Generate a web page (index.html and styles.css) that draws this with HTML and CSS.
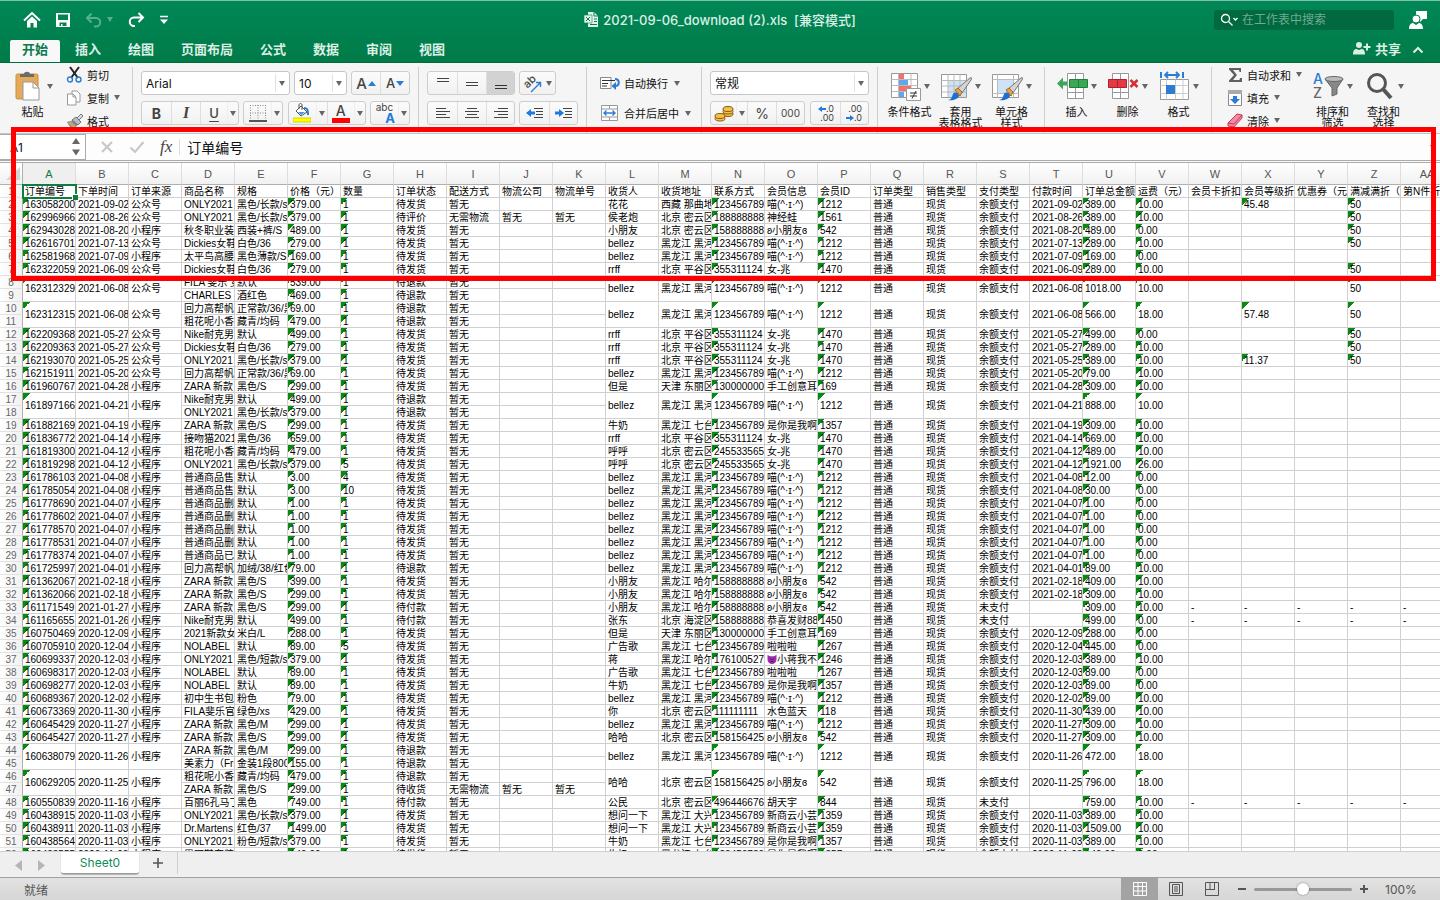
FILE: index.html
```
<!DOCTYPE html>
<html lang="zh-CN">
<head>
    <meta charset="UTF-8">
    <meta name="viewport" content="width=device-width, initial-scale=1.0">
    <title>2021-09-06_download (2).xls</title>
    <link rel="stylesheet" href="styles.css">
</head>
<body>

    <!-- Title bar and ribbon tabs -->
    <header class="top">
        <div class="titlebar">
            <div class="quick">
                <button class="plain" aria-label="主页"><svg width="18" height="18" viewBox="0 0 18 18"><path d="M1 9.500L9 2l8 7.500" fill="none" stroke="#fff" stroke-width="2"/><path d="M4 10l5-4.500L14 10v6.500h-3.500V12h-3v4.500H4z" fill="#fff"/></svg></button>
                <button class="plain save" aria-label="保存"><svg width="16" height="16" viewBox="0 0 16 16"><path d="M1 1h14v14H1z" fill="#fff"/><path d="M3 2.500h10V8H3zM4.500 10.500h7V14h-4v-2H6v2H4.500z" fill="#008252"/></svg></button>
                <button class="plain dim" aria-label="撤销"><svg width="18" height="16" viewBox="0 0 18 16"><path d="M6.500 1.500L2 6l4.500 4.500M2.500 6H11a4 4 0 0 1 0 8.500H9" fill="none" stroke="#fff" stroke-width="2"/></svg><i class="arrow light"></i></button>
                <button class="plain" aria-label="重做"><svg width="18" height="16" viewBox="0 0 18 16"><path d="M11.500 1L16 5.500 11.500 10M15.500 5.500H7a4 4 0 0 0 0 8.500h1" fill="none" stroke="#fff" stroke-width="2"/></svg></button>
                <button class="plain more" aria-label="自定义"><svg width="10" height="10" viewBox="0 0 10 10"><path d="M1 1.500h8" stroke="#fff" stroke-width="1.500"/><path d="M1 4.500h8L5 9z" fill="#fff"/></svg></button>
            </div>
            <h1 class="doc-title">
                <svg width="14" height="15" viewBox="0 0 14 15"><path d="M4 0h6l4 4v11H4z" fill="#e5f2ec"/><path d="M10 0v4h4" fill="none" stroke="#008252"/><path d="M0 3h8v8H0z" fill="#e5f2ec" stroke="#008252" stroke-width=".6"/><path d="M2 5l4 4M6 5L2 9M10 7h3M10 9.500h3M6 12.500h7" stroke="#008252"/></svg>
                2021-09-06_download (2).xls&nbsp; [兼容模式]
            </h1>
            <div class="title-right">
                <label class="search">
                    <svg width="18" height="14" viewBox="0 0 18 14"><circle cx="5.500" cy="5.500" r="4" fill="none" stroke="#fff" stroke-width="1.300"/><path d="M8.500 8.500l4 4M13.500 5l2 2 2-2" fill="none" stroke="#fff" stroke-width="1.300"/></svg>
                    <input type="text" placeholder="在工作表中搜索" aria-label="在工作表中搜索">
                </label>
                <button class="plain" aria-label="反馈"><svg width="20" height="20" viewBox="0 0 20 20"><path d="M8 1h11v8h-4l-3 3V9H8z" fill="#fff"/><circle cx="8" cy="9" r="4" fill="#fff" stroke="#008252"/><path d="M1 19c0-4 2-6 4-6l3 2 3-2c2 0 4 2 4 6z" fill="#fff"/></svg></button>
            </div>
        </div>
        <nav class="tabs">
            <a href="#" class="tab active">开始</a>
            <a href="#" class="tab">插入</a>
            <a href="#" class="tab">绘图</a>
            <a href="#" class="tab">页面布局</a>
            <a href="#" class="tab">公式</a>
            <a href="#" class="tab">数据</a>
            <a href="#" class="tab">审阅</a>
            <a href="#" class="tab">视图</a>
            <button class="plain share"><svg width="18" height="14" viewBox="0 0 18 14"><circle cx="6" cy="4" r="3" fill="#dcefe6"/><path d="M0 13.500c0-4 1.500-5.500 3.500-5.500L6 9l2.500-1c2 0 3.500 1.500 3.500 5.500z" fill="#dcefe6"/><path d="M10.500 6h7M14 2.500v7" stroke="#dcefe6" stroke-width="2"/></svg>共享</button>
            <button class="plain fold" aria-label="折叠"><svg width="12" height="8" viewBox="0 0 12 8"><path d="M1.500 6.500L6 2l4.500 4.500" fill="none" stroke="#dcefe6" stroke-width="2"/></svg></button>
        </nav>
    </header>

    <!-- Ribbon -->
    <section class="ribbon">
        <div class="group clipboard">
            <button class="big">
                <span class="big-top"><svg width="31" height="30" viewBox="0 0 31 30"><rect x="3" y="3" width="22" height="25" rx="1.500" fill="#e5aa59" stroke="#c98f3e"/><path d="M7 6V3h4c0-3 6-3 6 0h4v3z" fill="#6b6b6b"/><path d="M10 11h10l6 6v12H10z" fill="#fff" stroke="#999"/><path d="M20 11v6h6" fill="none" stroke="#999"/></svg><i class="arrow"></i></span>
                <span class="big-label">粘贴</span>
            </button>
            <div class="small-list">
                <button class="small"><svg width="18" height="18" viewBox="0 0 18 18"><path d="M4 1l8 11M13 1L5 12" stroke="#222" stroke-width="2"/><circle cx="4" cy="13.500" r="2.500" fill="none" stroke="#2b7cd3" stroke-width="1.400"/><circle cx="12.500" cy="13.500" r="2.500" fill="none" stroke="#2b7cd3" stroke-width="1.400"/></svg>剪切</button>
                <button class="small"><svg width="18" height="18" viewBox="0 0 18 18"><path d="M6 2h5l3 3v8H6z" fill="#fff" stroke="#999"/><path d="M1.500 5H7l3 3v8H1.500z" fill="#fff" stroke="#999"/><path d="M7 5v3h3" fill="none" stroke="#999"/></svg>复制<i class="arrow"></i></button>
                <button class="small"><svg width="18" height="18" viewBox="0 0 18 18"><path d="M1 10l7-2 4 4-4 6c-3-2-5-4-7-8z" fill="#4a90d0"/><path d="M6 8l4-3 5 5-3 3z" fill="#bbb" stroke="#777"/><path d="M11 6l4-4 2 2-4 4z" fill="#ddd" stroke="#777"/><path d="M1 10l4-1 5 5-2 3z" fill="#c9a35c"/></svg>格式</button>
            </div>
        </div>
        <span class="divider"></span>

        <div class="group rows">
            <div class="row">
                <span class="combo font-name"><select aria-label="字体"><option>Arial</option></select></span>
                <span class="combo font-size"><select aria-label="字号"><option>10</option></select></span>
                <div class="btns">
                    <button class="w30 letter" aria-label="增大字号">A<svg width="8" height="5" viewBox="0 0 8 5"><path d="M0 5l4-5 4 5z" fill="#2b7cd3"/></svg></button>
                    <button class="w29 letter small-a" aria-label="减小字号">A<svg width="8" height="5" viewBox="0 0 8 5"><path d="M0 0l4 5 4-5z" fill="#2b7cd3"/></svg></button>
                </div>
            </div>
            <div class="row spread">
                <div class="btns">
                    <button class="w29 bold">B</button>
                    <button class="w29 italic">I</button>
                    <button class="w27 under">U</button>
                    <button class="drop" aria-label="下划线"><i class="arrow"></i></button>
                </div>
                <div class="btns">
                    <button class="w27" aria-label="边框"><svg width="18" height="18" viewBox="0 0 18 18"><path d="M1 1.500h16M1 9h16M1.500 1v15M9 1v15M16.500 1v15" stroke="#888" stroke-dasharray="1 1.500"/><path d="M0 17h18" stroke="#222" stroke-width="1.500"/></svg></button>
                    <button class="drop" aria-label="边框选项"><i class="arrow"></i></button>
                </div>
                <div class="btns">
                    <button class="w27" aria-label="填充颜色"><svg width="18" height="20" viewBox="0 0 18 20"><path d="M8 3l6 6-6 4-5-5z" fill="#fff" stroke="#555"/><path d="M6 6V2c0-2 3-2 3 0v5" fill="none" stroke="#555"/><path d="M11 5c4 0 4 3 4 7" fill="none" stroke="#2b7cd3" stroke-width="2"/><path d="M5 9h7l-4 3z" fill="#4a94dd"/><path d="M0 15h18v4H0z" fill="#ff0" stroke="#d6d600"/></svg></button>
                    <button class="drop" aria-label="填充选项"><i class="arrow"></i></button>
                    <button class="w27 font-color" aria-label="字体颜色">A</button>
                    <button class="drop" aria-label="颜色选项"><i class="arrow"></i></button>
                </div>
                <div class="btns">
                    <button class="w27 phonetic" aria-label="拼音"><span>abc</span><b>A</b></button>
                    <button class="drop" aria-label="拼音选项"><i class="arrow"></i></button>
                </div>
            </div>
        </div>
        <span class="divider"></span>

        <div class="group rows">
            <div class="row">
                <div class="btns">
                    <button class="w29" aria-label="顶端对齐"><svg width="14" height="16" viewBox="0 0 14 16"><path d="M1 3.500h12M1 6.500h12" stroke="#444"/></svg></button>
                    <button class="w29" aria-label="垂直居中"><svg width="14" height="16" viewBox="0 0 14 16"><path d="M1 7.500h12M1 10.500h12" stroke="#444"/></svg></button>
                    <button class="w30 pressed" aria-label="底端对齐"><svg width="14" height="16" viewBox="0 0 14 16"><path d="M1 10.500h12M1 13.500h12" stroke="#333"/></svg></button>
                </div>
                <div class="btns">
                    <button class="w37" aria-label="方向"><svg width="18" height="20" viewBox="0 0 18 20"><text x="0" y="13" transform="rotate(-45 5 10)" font-family="Inter" font-size="11" font-weight="500" fill="#444">ab</text><path d="M7 19l9-9M12 9.500h4.500V14" fill="none" stroke="#2b7cd3" stroke-width="1.400"/></svg><i class="arrow"></i></button>
                </div>
            </div>
            <div class="row">
                <div class="btns">
                    <button class="w29" aria-label="左对齐"><svg width="16" height="14" viewBox="0 0 16 14"><path d="M1 2.500h10M1 5.500h14M1 8.500h10M1 11.500h14" stroke="#444"/></svg></button>
                    <button class="w29" aria-label="居中"><svg width="16" height="14" viewBox="0 0 16 14"><path d="M3 2.500h10M1 5.500h14M3 8.500h10M1 11.500h14" stroke="#444"/></svg></button>
                    <button class="w30" aria-label="右对齐"><svg width="16" height="14" viewBox="0 0 16 14"><path d="M5 2.500h10M1 5.500h14M5 8.500h10M1 11.500h14" stroke="#444"/></svg></button>
                </div>
                <div class="btns">
                    <button class="w29" aria-label="减少缩进"><svg width="18" height="14" viewBox="0 0 18 14"><path d="M8 2.500h9M10 5.500h7M10 8.500h7M8 11.500h9" stroke="#444"/><path d="M0 7l5-4v2.500h4v3H5V11z" fill="#1f7bdc"/></svg></button>
                    <button class="w30" aria-label="增加缩进"><svg width="18" height="14" viewBox="0 0 18 14"><path d="M8 2.500h9M10 5.500h7M10 8.500h7M8 11.500h9" stroke="#444"/><path d="M9 7L4 3v2.500H0v3h4V11z" fill="#1f7bdc"/></svg></button>
                </div>
            </div>
        </div>
        <span class="divider"></span>

        <div class="group rows wrap-group">
            <button class="small tall"><svg width="20" height="16" viewBox="0 0 20 16"><path d="M.5 2.500H11v11H.500z" fill="#fff" stroke="#888"/><path d="M2 5.500h13M2 8.500h6M2 11h5" stroke="#333"/><path d="M15 4c5 0 5 7 0 7" fill="none" stroke="#2b7cd3" stroke-width="2"/><path d="M11.500 11l4.500-4v8z" fill="#2b7cd3"/></svg>自动换行<i class="arrow"></i></button>
            <button class="small tall"><svg width="20" height="18" viewBox="0 0 20 18"><path d="M1.500 1.500h16v15h-16zM1.500 5h16M1.500 13h16M9.500 1.500V5M9.500 13v3.500" fill="#fff" stroke="#999"/><path d="M4 9h11M6.500 6.500L4 9l2.500 2.500M12.500 6.500L15 9l-2.500 2.500" fill="none" stroke="#2b7cd3" stroke-width="1.400"/></svg>合并后居中<i class="arrow"></i></button>
        </div>
        <span class="divider"></span>

        <div class="group rows">
            <div class="row">
                <span class="combo number-format"><select aria-label="数字格式"><option>常规</option></select></span>
            </div>
            <div class="row spread">
                <div class="btns">
                    <button class="w25" aria-label="货币"><svg width="20" height="18" viewBox="0 0 20 18"><g fill="#f2c14a" stroke="#8a5a10"><ellipse cx="14" cy="10" rx="5" ry="2.500"/><ellipse cx="14" cy="7.500" rx="5" ry="2.500"/><ellipse cx="14" cy="5" rx="5" ry="2.500"/><ellipse cx="6" cy="14.500" rx="5" ry="2.500"/><ellipse cx="6" cy="12" rx="5" ry="2.500"/></g></svg></button>
                    <button class="drop" aria-label="货币选项"><i class="arrow"></i></button>
                    <button class="w29 percent">%</button>
                    <button class="w30 zeros">000</button>
                </div>
                <div class="btns">
                    <button class="w29 decimals" aria-label="增加小数"><span><svg width="8" height="6" viewBox="0 0 8 6"><path d="M0 3l4-3v2h4v2H4v2z" fill="#1f7bdc"/></svg>.0</span><span>.00</span></button>
                    <button class="w30 decimals" aria-label="减少小数"><span>.00</span><span><svg width="8" height="6" viewBox="0 0 8 6"><path d="M8 3L4 0v2H0v2h4v2z" fill="#1f7bdc"/></svg>.0</span></button>
                </div>
            </div>
        </div>
        <span class="divider"></span>

        <div class="group bigs">
            <button class="big">
                <span class="big-top"><svg width="31" height="30" viewBox="0 0 31 30"><path d="M1.500 2.500h26v24h-26z" fill="#fff" stroke="#999"/><path d="M1.500 8.500h26M1.500 14.500h26M1.500 20.500h26M8.500 2.500v24M21 2.500v24" stroke="#bbb"/><path d="M9 3h5v5H9zM9 15h12v5H9z" fill="#f4706c"/><path d="M9 9h9v5H9zM9 21h5v5H9z" fill="#5ea7ea"/><path d="M16.500 17.500h14v12h-14z" fill="#fff" stroke="#999"/><path d="M20 22h7M20 25h7M26 20l-4 7.500" stroke="#333"/></svg><i class="arrow"></i></span>
                <span class="big-label">条件格式</span>
            </button>
            <button class="big">
                <span class="big-top"><svg width="31" height="30" viewBox="0 0 31 30"><path d="M.5 3.500h25v23H.500z" fill="#fff" stroke="#999"/><path d="M7 9h18v17H7z" fill="#cfe3f6"/><path d="M.5 9.500h25M.5 15h25M.5 21h25M7 3.500v23M13 3.500v23M19 3.500v23" stroke="#bbb"/><path d="M16 18L29 7c2-1 2 0 1 2l-9 13z" fill="#d5d5d5" stroke="#777"/><path d="M14 19l3-2 4 4-2 4z" fill="#e9a243" stroke="#a56a19"/><path d="M7 29c3 0 4-3 5-6 2-3 6-1 6 2-1 3-6 5-11 4z" fill="#1f6fd0"/></svg><i class="arrow"></i></span>
                <span class="big-label">套用<br>表格格式</span>
            </button>
            <button class="big">
                <span class="big-top"><svg width="31" height="30" viewBox="0 0 31 30"><path d="M.5 3.500h26v23H.500z" fill="#fff" stroke="#999"/><path d="M6 9h15v13H6z" fill="#cfe3f6"/><path d="M.5 8.500h26M.5 22.500h26M5.500 3.500v23M21.500 3.500v23" stroke="#bbb"/><path d="M16 18L29 7c2-1 2 0 1 2l-9 13z" fill="#d5d5d5" stroke="#777"/><path d="M14 19l3-2 4 4-2 4z" fill="#e9a243" stroke="#a56a19"/><path d="M7 29c3 0 4-3 5-6 2-3 6-1 6 2-1 3-6 5-11 4z" fill="#1f6fd0"/></svg><i class="arrow"></i></span>
                <span class="big-label">单元格<br>样式</span>
            </button>
        </div>
        <span class="divider"></span>

        <div class="group bigs">
            <button class="big">
                <span class="big-top"><svg width="31" height="30" viewBox="0 0 31 30"><path d="M10.500 2.500h16v25h-16zM18.500 2.500v25M10.500 21.500h16" fill="#fff" stroke="#999"/><path d="M12.500 8.500h18v8h-18zM21.500 8.500v8" fill="#3ba757" stroke="#1f8139"/><path d="M0 12.500l6-6v4h4v4H6v4z" fill="#3ba757"/></svg><i class="arrow"></i></span>
                <span class="big-label">插入</span>
            </button>
            <button class="big">
                <span class="big-top"><svg width="31" height="30" viewBox="0 0 31 30"><path d="M4.500 2.500h16v25h-16zM12.500 2.500v25M4.500 21.500h16" fill="#fff" stroke="#999"/><path d="M.5 8.500h18v8H.500zM9.500 8.500v8" fill="#e23b45" stroke="#b71d2a"/><path d="M22.500 9l7 7M29.500 9l-7 7" stroke="#d42d38" stroke-width="2.500"/></svg><i class="arrow"></i></span>
                <span class="big-label">删除</span>
            </button>
            <button class="big">
                <span class="big-top"><svg width="31" height="30" viewBox="0 0 31 30"><path d="M1.500 8.500h28v20h-28z" fill="#fff" stroke="#999"/><path d="M1.500 14.500h28M1.500 22.500h28M7.500 8.500v20M16.500 8.500v20M24 8.500v20" stroke="#ccc"/><path d="M7 14h9v9H7z" fill="#2b7cd3"/><path d="M2 1v6M24 1v6" stroke="#2b7cd3" stroke-width="2"/><path d="M6 4h14M9 1L6 4l3 3M17 1l3 3-3 3" fill="none" stroke="#2b7cd3" stroke-width="1.800"/></svg><i class="arrow"></i></span>
                <span class="big-label">格式</span>
            </button>
        </div>
        <span class="divider"></span>

        <div class="group editing">
            <div class="small-list">
                <button class="small"><svg width="17" height="18" viewBox="0 0 17 18"><path d="M2 2h12v4h-1.500l-.5-2H6l4 5-4 5h6.500l.5-2H15v4H2v-1.500L7 9 2 3.500z" fill="#606060"/></svg>自动求和<i class="arrow"></i></button>
                <button class="small"><svg width="17" height="18" viewBox="0 0 17 18"><path d="M1.500 1.500h13v15h-13z" fill="#fff" stroke="#888"/><path d="M1 1h14v4H1z" fill="#aaa"/><path d="M6 7h4v3h3l-5 5-5-5h3z" fill="#2b7cd3"/></svg>填充<i class="arrow"></i></button>
                <button class="small"><svg width="17" height="18" viewBox="0 0 17 18"><path d="M1 11L10 2l5 1v3l-8 9-6-1z" fill="#f28aa2" stroke="#c4375a"/><path d="M1 11l6 1 8-9" fill="none" stroke="#c4375a"/></svg>清除<i class="arrow"></i></button>
            </div>
            <button class="big">
                <span class="big-top"><svg width="31" height="30" viewBox="0 0 31 30"><text x="0" y="13" font-family="Inter" font-size="14" font-weight="500" fill="#2b7cd3">A</text><text x="0" y="27" font-family="Inter" font-size="14" font-weight="500" fill="#666">Z</text><path d="M12 8l7 9v8l5-2v-6l6-9z" fill="#888" stroke="#666"/><ellipse cx="21" cy="8" rx="9" ry="2.500" fill="#bbb" stroke="#666"/></svg><i class="arrow"></i></span>
                <span class="big-label">排序和<br>筛选</span>
            </button>
            <button class="big">
                <span class="big-top"><svg width="31" height="30" viewBox="0 0 31 30"><circle cx="13" cy="12" r="8.500" fill="none" stroke="#555" stroke-width="3"/><path d="M19 18l8 9" stroke="#555" stroke-width="4"/></svg><i class="arrow"></i></span>
                <span class="big-label">查找和<br>选择</span>
            </button>
        </div>
    </section>

    <!-- Formula bar -->
    <section class="formula">
        <div class="name-box">
            <input type="text" value="A1" aria-label="名称框">
            <svg width="8" height="18" viewBox="0 0 8 18"><path d="M0 6l4-6 4 6zM0 11.500h8l-4 6z" fill="#666"/></svg>
        </div>
        <button class="plain cancel" aria-label="取消"><svg width="14" height="14" viewBox="0 0 14 14"><path d="M2 2l10 10M12 2L2 12" stroke="#c8c8c8" stroke-width="2.200"/></svg></button>
        <button class="plain" aria-label="输入"><svg width="16" height="14" viewBox="0 0 16 14"><path d="M1.500 7.500l4.500 4.500L14.500 2" fill="none" stroke="#c8c8c8" stroke-width="2.200"/></svg></button>
        <span class="fx">fx</span>
        <input class="formula-input" type="text" value="订单编号" aria-label="编辑栏">
        <i class="arrow"></i>
    </section>

    <main class="sheet">
        <table class="grid" id="grid"></table>
    </main>

    <footer class="sheet-tabs">
        <svg width="34" height="12" viewBox="0 0 34 12"><path d="M8 0v11L1 5.500zM24 0v11l7-5.500z" fill="#b5b5b5"/></svg>
        <button class="sheet-tab">Sheet0</button>
        <button class="plain add" aria-label="新建工作表"><svg width="12" height="12" viewBox="0 0 12 12"><path d="M6 1v10M1 6h10" stroke="#555" stroke-width="1.600"/></svg></button>
    </footer>

    <div class="status">
        <span class="ready">就绪</span>
        <button class="view current" aria-label="普通"><svg width="14" height="14" viewBox="0 0 14 14"><path d="M.5.500h13v13H.500zM.5 4.500h13M.5 9h13M5 .5v13M9.500.500v13" fill="none" stroke="#fff"/></svg></button>
        <button class="view" aria-label="页面布局"><svg width="14" height="14" viewBox="0 0 14 14"><path d="M.5.500h13v13H.500zM3.500 2.500h7v9h-7zM5 5h4M5 7h4M5 9h4" fill="none" stroke="#555"/></svg></button>
        <button class="view" aria-label="分页预览"><svg width="14" height="14" viewBox="0 0 14 14"><path d="M.5.500h13v13H.500zM5 .5v7M9.500.500v7M.5 7.500H10" fill="none" stroke="#555"/></svg></button>
        <button class="plain zoom-btn" aria-label="缩小"><svg width="10" height="10" viewBox="0 0 10 10"><path d="M1 5h8" stroke="#555" stroke-width="2"/></svg></button>
        <input class="zoom" type="range" min="0" max="100" value="50" aria-label="缩放">
        <button class="plain zoom-btn" aria-label="放大"><svg width="10" height="10" viewBox="0 0 10 10"><path d="M1 5h8M5 1v8" stroke="#555" stroke-width="2"/></svg></button>
        <span class="percent-label">100%</span>
    </div>

    <!-- Red marker drawn over the formula bar and first rows -->
    <div class="marker"></div>

    <script src="sheet.js"></script>
</body>
</html>
```
FILE: styles.css
```
* {
    box-sizing: border-box;
}

body {
    margin: 0;
    height: 100vh;
    display: flex;
    flex-direction: column;
    overflow: hidden;
    position: relative;
    font-family: Inter, "Noto Sans CJK SC", sans-serif;
    font-size: 11px;
    color: #111;
    background: #fff;
}

button, input, select {
    font: inherit;
    color: inherit;
    margin: 0;
    padding: 0;
    border: none;
    background: none;
}

svg {
    display: block;
    flex: none;
}

.plain {
    display: flex;
    align-items: center;
}

.arrow {
    flex: none;
    width: 0;
    height: 0;
    border-left: 3px solid transparent;
    border-right: 3px solid transparent;
    border-top: 5px solid #666;
}

.arrow.light {
    border-top-color: #fff;
}

/* Title bar */
.top {
    flex: none;
    background: linear-gradient(#008757, #007b48);
    border-top: 1px solid #7fc0a6;
    border-bottom: 1px solid #006b3e;
}

.titlebar {
    display: grid;
    grid-template-columns: 1fr auto 1fr;
    align-items: center;
    height: 37px;
}

.quick {
    display: flex;
    align-items: center;
    padding-left: 23px;
    gap: 14px;
}

.quick .dim {
    opacity: 0.35;
    gap: 4px;
}

.doc-title {
    display: flex;
    align-items: center;
    gap: 5px;
    margin: 0;
    font-size: 13px;
    font-weight: 500;
    color: #dcefe6;
}

.title-right {
    display: flex;
    justify-content: flex-end;
    align-items: center;
    gap: 14px;
    padding-right: 12px;
}

.search {
    display: flex;
    align-items: center;
    gap: 4px;
    width: 180px;
    height: 20px;
    padding: 0 6px;
    border-radius: 3px;
    background: #00693f;
}

.search input {
    width: 140px;
    font-size: 12px;
    color: #fff;
}

.search input::placeholder {
    color: #6fab91;
}

.tabs {
    display: flex;
    align-items: flex-end;
    gap: 3px;
    height: 24px;
    padding: 0 16px 0 10px;
}

.tab {
    height: 22px;
    padding: 0 12px;
    line-height: 19px;
    font-size: 13px;
    font-weight: 700;
    color: #dcefe6;
    text-decoration: none;
}

.tab.active {
    background: #f8f8f8;
    color: #0b7a4b;
    border-radius: 2px 2px 0 0;
}

.share {
    gap: 4px;
    margin-left: auto;
    height: 24px;
    padding-bottom: 4px;
    font-size: 13px;
    font-weight: 700;
    color: #dcefe6;
}

.fold {
    height: 24px;
    margin-left: 8px;
}

/* Ribbon */
.ribbon {
    flex: none;
    display: flex;
    height: 70px;
    overflow: hidden;
    background: #f5f5f5;
}

.divider {
    flex: none;
    width: 1px;
    margin-top: 4px;
    background: #cfcfcf;
}

.group {
    display: flex;
    flex: none;
    padding: 0 8px;
}

.clipboard {
    gap: 8px;
    padding: 0 11px 0 7px;
}

.bigs {
    padding: 0 7px 0 6px;
}

.editing {
    padding-left: 15px;
}

.rows {
    flex-direction: column;
    gap: 6px;
    padding-top: 8px;
}

.wrap-group {
    padding: 8px 10px 0 13px;
}

.row {
    display: flex;
    gap: 4px;
    height: 24px;
}

.spread {
    justify-content: space-between;
}

.big {
    display: flex;
    flex-direction: column;
    align-items: center;
    width: 51px;
    padding-top: 8px;
}

.big-top {
    display: flex;
    align-items: center;
    gap: 3px;
}

.big-label {
    margin-top: 6px;
    line-height: 11px;
    white-space: nowrap;
}

.small-list {
    width: 80px;
}

.clipboard .small-list {
    width: 55px;
}

.small {
    display: flex;
    align-items: center;
    gap: 3px;
    height: 23px;
    white-space: nowrap;
}

.small .arrow {
    margin-left: 2px;
}

.tall {
    height: 24px;
    gap: 4px;
}

.btns {
    display: flex;
    height: 24px;
    border: 1px solid #cdcdcd;
    border-radius: 3px;
    background: linear-gradient(#fbfbfb, #f1f1f1);
    overflow: hidden;
}

.btns button {
    display: flex;
    align-items: center;
    justify-content: center;
    color: #444;
}

.btns button + button {
    border-left: 1px solid #dedede;
}

.btns button + .drop {
    border-left-color: #eee;
}

.btns .pressed {
    background: #d2d2d2;
}

.w25 { width: 25px; }
.w27 { width: 27px; }
.w29 { width: 29px; }
.w30 { width: 28px; }
.w37 { width: 35px; gap: 4px; }
.drop { width: 11px; }

.letter {
    font-size: 15px;
    font-weight: 500;
    gap: 1px;
}

.small-a {
    font-size: 13px;
}

.bold {
    font-size: 14px;
    font-weight: 700;
}

.italic {
    font-family: "Liberation Serif", serif;
    font-size: 16px;
    font-style: italic;
    font-weight: 700;
}

.under {
    font-size: 13px;
    font-weight: 500;
    text-decoration: underline;
    text-underline-offset: 3px;
}

.btns .font-color {
    flex-direction: column;
    font-size: 14px;
    font-weight: 500;
    line-height: 15px;
}

.font-color::after {
    content: "";
    width: 18px;
    height: 5px;
    background: #f00;
}

.btns .phonetic {
    flex-direction: column;
    line-height: 10px;
    font-size: 10px;
}

.phonetic b {
    align-self: flex-end;
    font-size: 13px;
    line-height: 12px;
    color: #1f7bdc;
    padding-right: 3px;
}

.percent {
    font-size: 14px;
}

.zeros {
    font-size: 10px;
}

.btns .decimals {
    flex-direction: column;
    align-items: flex-end;
    padding-right: 6px;
    font-size: 9px;
    line-height: 9px;
}

.decimals span {
    display: flex;
    align-items: center;
}

.combo {
    position: relative;
    height: 24px;
    border: 1px solid #c6c6c6;
    border-radius: 3px;
    background: #fff;
}

.combo select {
    width: 100%;
    height: 100%;
    padding-left: 4px;
    appearance: none;
    font-size: 12px;
}

/* Triangle over the right end of the select */
.combo::after {
    content: "";
    position: absolute;
    right: 4px;
    top: 9px;
    border-left: 3px solid transparent;
    border-right: 3px solid transparent;
    border-top: 5px solid #666;
}

.combo::before {
    content: "";
    position: absolute;
    right: 13px;
    top: 2px;
    bottom: 2px;
    border-left: 1px solid #e2e2e2;
}

.font-name { width: 149px; }
.font-size { width: 53px; }
.number-format { width: 159px; }

/* Formula bar */
.formula {
    flex: none;
    display: flex;
    align-items: center;
    gap: 14px;
    height: 30px;
    padding-right: 4px;
    border-top: 1px solid #c4c4c4;
    border-bottom: 3px double #aaa;
    background: #fdfdfd;
}

.name-box {
    display: flex;
    align-items: center;
    width: 86px;
    height: 26px;
    padding: 0 5px 0 10px;
    border: 1px solid #aaa;
    border-left: none;
    background: #fff;
}

.name-box input {
    flex: 1;
    width: 40px;
    font-size: 12px;
}

.cancel {
    margin-right: 1px;
}

.fx {
    padding: 0 7px 0 1px;
    border-right: 1px solid #ddd;
    font-family: "Liberation Serif", serif;
    font-size: 17px;
    font-style: italic;
    line-height: 16px;
    color: #444;
}

.formula-input {
    flex: 1;
    margin-left: -7px;
    font-size: 14px;
}

/* Spreadsheet */
.sheet {
    flex: 1;
    min-height: 0;
    overflow: hidden;
}

.grid {
    table-layout: fixed;
    width: 1454px;
    border-collapse: separate;
    border-spacing: 0;
    font-family: "Liberation Sans", "Noto Sans CJK SC", sans-serif;
    font-size: 10px;
    line-height: 10px;
    color: #000;
}

.grid th, .grid td {
    height: 13px;
    padding: 2px 0 0;
    border-right: 1px solid #d0d0d0;
    border-bottom: 1px solid #d0d0d0;
    white-space: nowrap;
    overflow: hidden;
    font-weight: 400;
}

.grid td {
    padding-left: 2px;
    text-align: left;
}

.grid td[rowspan] {
    padding-top: 0;
}

.grid thead th {
    height: 22px;
    padding: 0;
    font-size: 11px;
    color: #555;
    background: linear-gradient(#fff, #f1f1f1);
    border-right-color: #ddd;
    border-bottom-color: #b0b0b0;
}

.grid tbody th {
    color: #666;
    background: linear-gradient(90deg, #fff, #f1f1f1);
    border-right-color: #b0b0b0;
    border-bottom-color: #e2e2e2;
}

.grid .corner {
    width: 23px;
    border-right-color: #b0b0b0;
}

.corner svg {
    margin-left: 6px;
}

.grid thead .picked {
    color: #0b7a4b;
    background: #efefef;
}

/* Text stored as number: green corner */
.grid .flag {
    background: linear-gradient(135deg, #068a10 50%, transparent 50%) 0 0 / 7px 7px no-repeat;
}

.grid .selected {
    position: relative;
    z-index: 1;
    overflow: visible;
    outline: 2px solid #107c41;
    outline-offset: -1px;
}

.selected::after {
    content: "";
    position: absolute;
    right: -3px;
    bottom: -3px;
    width: 5px;
    height: 5px;
    background: #107c41;
    border-left: 1px solid #fff;
    border-top: 1px solid #fff;
    box-sizing: content-box;
}

.devil {
    display: inline-block;
    vertical-align: top;
}

/* Bottom bars */
.sheet-tabs {
    flex: none;
    display: flex;
    height: 26px;
    padding-left: 14px;
    background: #efefef;
    border-top: 1px solid #d0d0d0;
}

.sheet-tabs > svg {
    margin: 8px 13px 0 0;
}

.sheet-tab {
    width: 78px;
    height: 22px;
    background: #fff;
    border-bottom: 1px solid #999;
    border-radius: 0 0 3px 3px;
    box-shadow: 0 1px 1px rgba(0, 0, 0, 0.25);
    font-size: 12px;
    color: #0f8a58;
}

.add {
    justify-content: center;
    width: 39px;
    height: 22px;
    border-right: 1px solid #cfcfcf;
}

.status {
    flex: none;
    display: flex;
    align-items: center;
    height: 23px;
    padding: 0 24px;
    border-top: 1px solid #a0a0a0;
    background: linear-gradient(#e2e2e2, #d6d6d6);
    font-size: 12px;
    color: #555;
}

.ready {
    margin-right: auto;
}

.view {
    display: flex;
    align-items: center;
    justify-content: center;
    width: 36px;
    height: 22px;
}

.view.current {
    width: 37px;
    background: #a3a3a3;
}

.zoom-btn {
    margin: 0 7px;
}

.zoom {
    width: 98px;
    height: 14px;
    appearance: none;
}

.zoom::-webkit-slider-runnable-track {
    height: 3px;
    border-radius: 2px;
    background: #999;
}

.zoom::-webkit-slider-thumb {
    appearance: none;
    width: 12px;
    height: 12px;
    margin-top: -5px;
    border-radius: 50%;
    background: #fff;
    box-shadow: 0 0 2px rgba(0, 0, 0, 0.5);
}

.percent-label {
    width: 31px;
    margin-left: 9px;
}

.marker {
    position: absolute;
    left: 11px;
    right: 4px;
    top: 127px;
    height: 154px;
    border: 5px solid #f00;
    z-index: 5;
    pointer-events: none;
}
```
FILE: sheet.js
```
const titles = ['订单编号', '下单时间', '订单来源', '商品名称', '规格', '价格（元）', '数量', '订单状态', '配送方式',
    '物流公司', '物流单号', '收货人', '收货地址', '联系方式', '会员信息', '会员ID', '订单类型', '销售类型', '支付类型',
    '付款时间', '订单总金额', '运费（元）', '会员卡折扣', '会员等级折', '优惠券（元', '满减满折（', '第N件折扣'];

// order|date|source|receiver|address|phone|member|id|total|freight|level discount|full discount
// "+" lines are the items: name|spec|price|count|status|delivery
const data = `
163058200|2021-09-02|公众号|花花|西藏 那曲地|123456789|喵(^·ɪ·^)|1212|389.00|10.00|45.48|50
+ONLY2021|黑色/长款/s|379.00|1|待发货|暂无
162996966|2021-08-26|公众号|侯老炮|北京 密云区|188888888|神经蛙|1561|389.00|10.00||50
+ONLY2021|黑色/长款/s|379.00|1|待评价|无需物流
162943028|2021-08-20|小程序|小朋友|北京 密云区|158888888|ʚ小朋友ɞ|542|489.00|0.00||50
+秋冬职业装|西装+裤/S|489.00|1|待发货|暂无
162616701|2021-07-13|公众号|bellez|黑龙江 黑河|123456789|喵(^·ɪ·^)|1212|289.00|10.00||50
+Dickies女鞋|白色/36|279.00|1|待发货|暂无
162581968|2021-07-09|小程序|bellez|黑龙江 黑河|123456789|喵(^·ɪ·^)|1212|169.00|0.00||
+太平鸟高腰|黑色薄款/S|169.00|1|待发货|暂无
162322059|2021-06-09|公众号|rrff|北京 平谷区|355311124|女-兆|1470|289.00|10.00||50
+Dickies女鞋|白色/36|279.00|1|待发货|暂无
162312329|2021-06-08|公众号|bellez|黑龙江 黑河|123456789|喵(^·ɪ·^)|1212|1018.00|10.00||50
+FILA 斐乐 女|默认|539.00|1|待退款|暂无
+CHARLES &|酒红色|469.00|1|待退款|暂无
162312315|2021-06-08|公众号|bellez|黑龙江 黑河|123456789|喵(^·ɪ·^)|1212|566.00|18.00|57.48|50
+回力高帮帆|正常款/36/黑|69.00|1|待退款|暂无
+粗花呢小香|藏青/均码|479.00|1|待退款|暂无
162209368|2021-05-27|公众号|rrff|北京 平谷区|355311124|女-兆|1470|499.00|0.00||50
+Nike耐克男|默认|499.00|1|待发货|暂无
162209363|2021-05-27|公众号|rrff|北京 平谷区|355311124|女-兆|1470|289.00|10.00||50
+Dickies女鞋|白色/36|279.00|1|待发货|暂无
162193070|2021-05-25|公众号|rrff|北京 平谷区|355311124|女-兆|1470|389.00|10.00|11.37|50
+ONLY2021|黑色/长款/s|379.00|1|待发货|暂无
162151911|2021-05-20|公众号|bellez|黑龙江 黑河|123456789|喵(^·ɪ·^)|1212|79.00|10.00||
+回力高帮帆|正常款/36/黑|69.00|1|待发货|暂无
161960767|2021-04-28|小程序|但是|天津 东丽区|130000000|手工创意耳|169|309.00|10.00||
+ZARA 新款|黑色/S|299.00|1|待发货|暂无
161897166|2021-04-21|小程序|bellez|黑龙江 黑河|123456789|喵(^·ɪ·^)|1212|888.00|10.00||
+Nike耐克男|默认|499.00|1|待退款|暂无
+ONLY2021|黑色/长款/s|379.00|1|待退款|暂无
161882169|2021-04-19|小程序|牛奶|黑龙江 七台|123456789|是你是我啊|1357|309.00|10.00||
+ZARA 新款|黑色/S|299.00|1|待发货|暂无
161836772|2021-04-14|小程序|rrff|北京 平谷区|355311124|女-兆|1470|669.00|10.00||
+接吻猫2021|黑色/36|659.00|1|待发货|暂无
161819300|2021-04-12|小程序|呼呼|北京 密云区|245533565|女-兆|1470|489.00|10.00||
+粗花呢小香|藏青/均码|479.00|1|待发货|暂无
161819298|2021-04-12|小程序|呼呼|北京 密云区|245533565|女-兆|1470|1921.00|26.00||
+ONLY2021|黑色/长款/s|379.00|5|待发货|暂无
161786103|2021-04-08|小程序|bellez|黑龙江 黑河|123456789|喵(^·ɪ·^)|1212|12.00|0.00||
+普通商品售|默认|3.00|4|待发货|暂无
161785054|2021-04-08|小程序|bellez|黑龙江 黑河|123456789|喵(^·ɪ·^)|1212|30.00|0.00||
+普通商品售|默认|3.00|10|待发货|暂无
161778690|2021-04-07|小程序|bellez|黑龙江 黑河|123456789|喵(^·ɪ·^)|1212|1.00|0.00||
+普通商品删|默认|1.00|1|待发货|暂无
161778602|2021-04-07|小程序|bellez|黑龙江 黑河|123456789|喵(^·ɪ·^)|1212|1.00|0.00||
+普通商品删|默认|1.00|1|待发货|暂无
161778570|2021-04-07|小程序|bellez|黑龙江 黑河|123456789|喵(^·ɪ·^)|1212|1.00|0.00||
+普通商品删|默认|1.00|1|待发货|暂无
161778531|2021-04-07|小程序|bellez|黑龙江 黑河|123456789|喵(^·ɪ·^)|1212|1.00|0.00||
+普通商品删|默认|1.00|1|待发货|暂无
161778374|2021-04-07|小程序|bellez|黑龙江 黑河|123456789|喵(^·ɪ·^)|1212|1.00|0.00||
+普通商品已|默认|1.00|1|待发货|暂无
161725997|2021-04-01|小程序|bellez|黑龙江 黑河|123456789|喵(^·ɪ·^)|1212|89.00|10.00||
+回力高帮帆|加绒/38/红色|79.00|1|待退款|暂无
161362067|2021-02-18|小程序|小朋友|黑龙江 哈尔|158888888|ʚ小朋友ɞ|542|409.00|10.00||
+ZARA 新款|黑色/S|399.00|1|待发货|暂无
161362066|2021-02-18|小程序|小朋友|黑龙江 哈尔|158888888|ʚ小朋友ɞ|542|309.00|10.00||
+ZARA 新款|黑色/S|299.00|1|待发货|暂无
161171549|2021-01-27|小程序|小朋友|黑龙江 哈尔|158888888|ʚ小朋友ɞ|542|309.00|10.00||
+ZARA 新款|黑色/S|299.00|1|待付款|暂无
161165655|2021-01-26|小程序|张东|北京 海淀区|158888888|恭喜发财88|1450|499.00|0.00||
+Nike耐克男|默认|499.00|1|待付款|暂无
160750469|2020-12-09|小程序|但是|天津 东丽区|130000000|手工创意耳|169|288.00|0.00||
+2021新款女|米白/L|288.00|1|待发货|暂无
160705910|2020-12-04|小程序|广告歌|黑龙江 七台|123456789|啦啦啦|1267|445.00|0.00||
+NOLABEL|默认|89.00|5|待发货|暂无
160699337|2020-12-03|小程序|蒋|黑龙江 哈尔|176100527|:devil:小蒋我不|1246|389.00|10.00||
+ONLY2021|黑色/短款/s|379.00|1|待发货|暂无
160698317|2020-12-03|小程序|广告歌|黑龙江 七台|123456789|啦啦啦|1267|89.00|0.00||
+NOLABEL|默认|89.00|1|待发货|暂无
160698277|2020-12-03|小程序|牛奶|黑龙江 七台|123456789|是你是我啊|1357|89.00|0.00||
+NOLABEL|默认|89.00|1|待发货|暂无
160689367|2020-12-02|小程序|bellez|黑龙江 黑河|123456789|喵(^·ɪ·^)|1212|89.00|10.00||
+初中生书包|粉色|79.00|1|待发货|暂无
160673369|2020-11-30|小程序|你|北京 密云区|111111111|水色蓝天|118|439.00|10.00||
+FILA斐乐官|绿色/xs|429.00|1|待发货|暂无
160645429|2020-11-27|小程序|bellez|黑龙江 黑河|123456789|喵(^·ɪ·^)|1212|309.00|10.00||
+ZARA 新款|黑色/M|299.00|1|待发货|暂无
160645427|2020-11-27|小程序|哈哈|北京 密云区|158156425|ʚ小朋友ɞ|542|309.00|10.00||
+ZARA 新款|黑色/S|299.00|1|待发货|暂无
160638079|2020-11-26|小程序|bellez|黑龙江 黑河|123456789|喵(^·ɪ·^)|1212|472.00|18.00||
+ZARA 新款|黑色/M|299.00|1|待退款|暂无
+美素力（Fri|金装1段800|155.00|1|待退款|暂无
160629205|2020-11-25|小程序|哈哈|北京 密云区|158156425|ʚ小朋友ɞ|542|796.00|18.00||
+粗花呢小香|藏青/均码|479.00|1|待退款|暂无
+ZARA 新款|黑色/S|299.00|1|待收货|无需物流
160550839|2020-11-16|小程序|公民|北京 密云区|496446676|胡天宇|844|759.00|10.00||
+百丽6孔马丁|黑色|749.00|1|待付款|暂无
160438915|2020-11-03|小程序|想问一下|黑龙江 大兴|123456789|新商云小芸|1359|389.00|10.00||
+ONLY2021|黑色/长款/s|379.00|1|待发货|暂无
160438911|2020-11-03|小程序|想问一下|黑龙江 大兴|123456789|新商云小芸|1359|1509.00|10.00||
+Dr.Martens|红色/37|1499.00|1|待发货|暂无
160438564|2020-11-03|小程序|牛奶|黑龙江 七台|123456789|是你是我啊|1357|389.00|10.00||
+ONLY2021|粉色/短款/s|379.00|1|待发货|暂无
160438555|2020-11-03|小程序|牛奶|黑龙江 七台|123456789|是你是我啊|1357|149.00|0.00||
+男可鞋套装||149.00|1|待发货|暂无`;

const devil = '<svg class="devil" width="10" height="9" viewBox="0 0 10 10"><path d="M0 0l3 1.500h4L10 0v5a5 5 0 0 1-10 0z" fill="#9b2fae"/><path d="M2.500 4l2 1M7.500 4l-2 1M3 7.500q2-1 4 0" fill="none" stroke="#4b1060"/></svg>';
const flagged = [0, 5, 6, 13, 15, 20, 21, 23, 25];

function cell(value, col, span) {
    const flag = value && value !== '-' && flagged.includes(col) ? ' class="flag"' : '';
    const rows = span > 1 ? ` rowspan="${span}"` : '';
    return `<td${flag}${rows}>${value.replace(':devil:', devil)}</td>`;
}

// Group item lines under their order
const orders = [];
data.trim().split('\n').forEach(line => {
    if (line[0] === '+') {
        orders[orders.length - 1].items.push(line.slice(1).split('|'));
    } else {
        orders.push({ info: line.split('|'), items: [] });
    }
});

let html = '<thead><tr><th class="corner"><svg width="15" height="14" viewBox="0 0 15 14"><path d="M14 0v13H0z" fill="#d4d4d4"/></svg></th>';
titles.forEach((t, i) => {
    const name = i < 26 ? String.fromCharCode(65 + i) : 'AA';
    html += `<th${i === 0 ? ' class="picked"' : ''}>${name}</th>`;
});
html += '</tr></thead><tbody><tr><th>1</th>';
titles.forEach((t, i) => {
    html += `<td${i === 0 ? ' class="selected"' : ''}>${t}</td>`;
});
html += '</tr>';

let number = 2;
orders.forEach(({ info, items }) => {
    const [id, date, source, receiver, address, phone, member, memberId, total, freight, level, full] = info;
    const span = items.length;
    const unpaid = items[0][4] === '待付款';
    const none = unpaid ? '-' : '';

    items.forEach((item, i) => {
        const shipped = item[5] === '无需物流' ? '暂无' : '';
        html += `<tr><th>${number++}</th>`;
        if (i === 0) {
            html += [id, date, source].map((v, c) => cell(v, c, span)).join('');
        }
        html += [...item, shipped, shipped].map((v, c) => cell(v, c + 3, 1)).join('');
        if (i === 0) {
            const rest = [receiver, address, phone, member, memberId, '普通', '现货', unpaid ? '未支付' : '余额支付',
                unpaid ? '' : date, total, freight, none, level || none, none, full || none, none];
            html += rest.map((v, c) => cell(v, c + 11, span)).join('');
        }
        html += '</tr>';
    });
});

document.getElementById('grid').innerHTML = html + '</tbody>';
```
